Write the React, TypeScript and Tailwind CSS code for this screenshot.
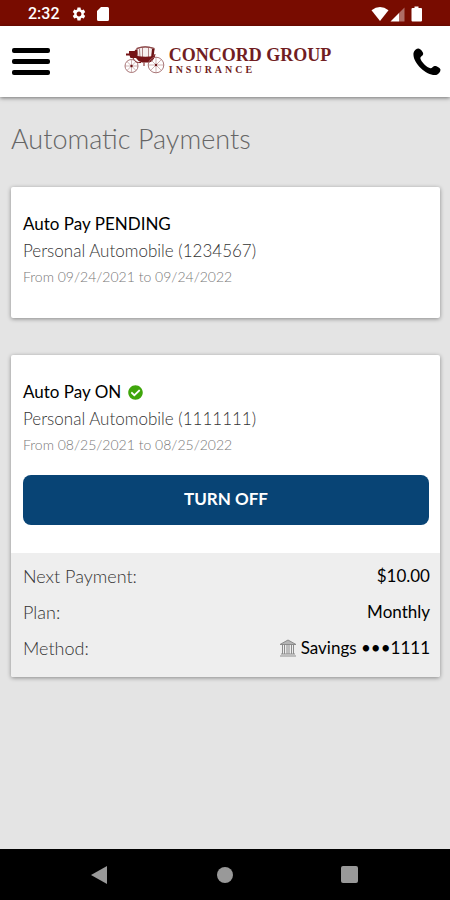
import { FaCheckCircle } from "react-icons/fa";
import { MdSettings } from "react-icons/md";

interface Policy {
  status: string;
  active: boolean;
  number: string;
  from: string;
  to: string;
}

const PENDING: Policy = {
  status: "Auto Pay PENDING",
  active: false,
  number: "1234567",
  from: "09/24/2021",
  to: "09/24/2022",
};

const ENROLLED: Policy = {
  status: "Auto Pay ON",
  active: true,
  number: "1111111",
  from: "08/25/2021",
  to: "08/25/2022",
};

function StatusBar() {
  return (
    <div className="flex h-[26px] items-center justify-between bg-[#780c00] pt-0.5 pr-[27px] pl-7 text-white">
      <div className="flex items-center">
        <span className="w-[43px] font-[Roboto,sans-serif] text-base font-medium">2:32</span>
        <MdSettings className="size-4" />
        <svg viewBox="0 0 12 14" className="ml-[10px] h-[14px] w-3" fill="currentColor" aria-hidden="true">
          <path d="M4 0h6.500a1.500 1.500 0 0 1 1.500 1.500v11a1.500 1.500 0 0 1-1.500 1.500h-9A1.500 1.500 0 0 1 0 12.500V4z" />
        </svg>
      </div>
      <svg viewBox="0 0 52 16" className="h-4 w-[52px]" fill="currentColor" aria-hidden="true">
        <path d="M0.500 4.200Q9 -2.400 17.500 4.200L9 15z" />
        <path d="M19.500 15.500 28 7v8.500z" />
        <path d="M28 7l5.500-5.500v14H28z" opacity="0.400" />
        <path d="M43.500 0.500h4v1.600h2.500a1 1 0 0 1 1 1V14.500a1 1 0 0 1-1 1h-8.500a1 1 0 0 1-1-1V3.100a1 1 0 0 1 1-1h2z" />
      </svg>
    </div>
  );
}

function Wheel({ cx, cy, r }: { cx: number; cy: number; r: number }) {
  const d = r * 0.7;
  return (
    <g stroke="#a06a6b" fill="none">
      <circle cx={cx} cy={cy} r={r} strokeWidth="0.900" />
      <path
        strokeWidth="0.500"
        d={`M${cx - r} ${cy}H${cx + r}M${cx} ${cy - r}V${cy + r}M${cx - d} ${cy - d}L${cx + d} ${cy + d}M${cx - d} ${cy + d}L${cx + d} ${cy - d}`}
      />
      <circle cx={cx} cy={cy} r="1.200" fill="#6b1517" stroke="none" />
    </g>
  );
}

function Carriage() {
  return (
    <svg viewBox="0 0 41 29" className="h-[29px] w-[41px]" aria-hidden="true">
      <path d="M13 3.500Q21 0.200 30 3.500L28.500 13H14z" fill="#f7f0f0" stroke="#8d4a4b" strokeWidth="0.800" />
      <path d="M12.500 3.600Q21 0 30.500 3.600" fill="none" stroke="#8d4a4b" strokeWidth="1.200" />
      <path d="M18.500 3v10M24.500 3v10M15.500 4l.5 8" stroke="#a06a6b" strokeWidth="0.800" />
      <path d="M28 4h2.500L29.500 13H27z" fill="#6b1517" />
      <path d="M2 8.500h3V6h5.500l1.200-1.500h1.500V11q8 1.500 16.800 0-.5 4.500-5 6.500h-7q-4-1-6-4.500H6.500l-1-2.500H2z" fill="#761417" />
      <path d="M9 13q2 5.500 8 4.500M31 9q-1 7-6 8M20 17.500v3.500" fill="none" stroke="#761417" strokeWidth="1" />
      <Wheel cx={7.5} cy={21} r={6.5} />
      <Wheel cx={32} cy={20} r={7.8} />
    </svg>
  );
}

function Header() {
  return (
    <header className="z-10 flex h-[71px] items-center justify-between bg-white pr-[9px] pl-3 shadow-[0_1px_4px_rgba(0,0,0,0.5)]">
      <button type="button" aria-label="Menu" className="flex w-[38px] flex-col gap-1.5">
        <span className="h-[5px] rounded-xs bg-black" />
        <span className="h-[5px] rounded-xs bg-black" />
        <span className="h-[5px] rounded-xs bg-black" />
      </button>
      <a href="#home" className="mr-2 mb-1 flex items-center gap-1 font-['Liberation_Serif',serif] text-[#711d22]">
        <Carriage />
        <span className="flex flex-col">
          <span className="text-lg leading-5 font-bold">CONCORD GROUP</span>
          <span className="text-[10px] leading-[10px] font-bold tracking-[3px]">INSURANCE</span>
        </span>
      </a>
      <button type="button" aria-label="Call">
        <svg viewBox="0 0 28 28" className="size-7" aria-hidden="true">
          <path d="M0.500 5C1 2.500 3.500.5 5.500.5c2 .3 4.800 3.500 4.700 5.500-.2 2-2.700 2.300-2.900 4 .2 3.300 6.800 9.700 10.200 10.300 1.700.2 2.200-2.100 4-2.300 2.200-.2 5.500 1.800 6 3.700 0 2.300-2.200 4.700-4.300 5.300C14.500 28.500-.8 15.500.5 5z" />
        </svg>
      </button>
    </header>
  );
}

function PolicyInfo({ policy }: { policy: Policy }) {
  return (
    <div>
      <h2 className="flex items-center gap-[7px] text-[17px] leading-7 text-black">
        {policy.status}
        {policy.active && <FaCheckCircle className="size-[15px] text-[#3fa60b]" />}
      </h2>
      <p className="text-[17px] leading-[26px] font-light text-[#333]">Personal Automobile ({policy.number})</p>
      <p className="text-sm leading-[26px] font-light text-[#777]">
        From {policy.from} to {policy.to}
      </p>
    </div>
  );
}

function BankIcon() {
  return (
    <svg viewBox="0 0 18 18" className="size-[18px]" fill="none" stroke="#8c8c8c" aria-hidden="true">
      <path d="M1 5.500 9 1l8 4.500z" fill="#b5b5b5" />
      <path d="M1 17h16M2 15h14" />
      <path d="M3.500 6v9M5.500 6v9M8 6v9M10 6v9M12.500 6v9M14.500 6v9" />
    </svg>
  );
}

function Detail({ label, children }: { label: string; children: React.ReactNode }) {
  return (
    <div className="flex h-9 items-center justify-between">
      <dt className="text-lg font-light text-[#333]">{label}</dt>
      <dd className="flex items-center gap-1 text-[17px] text-black">{children}</dd>
    </div>
  );
}

export default function App() {
  return (
    <div className="flex min-h-screen flex-col bg-[#e4e4e4] font-[Lato,sans-serif]">
      <StatusBar />
      <Header />

      <main className="flex-1 pr-2.5 pl-[11px]">
        <h1 className="pt-6 text-[27px] leading-9 font-light text-[#666]">Automatic Payments</h1>

        <section className="mt-[30px] rounded-xs bg-white pt-[23px] pr-[11px] pb-7 pl-3 shadow-[0_1px_4px_rgba(0,0,0,0.4)]">
          <PolicyInfo policy={PENDING} />
        </section>

        <section className="mt-[37px] rounded-xs bg-white shadow-[0_1px_4px_rgba(0,0,0,0.4)]">
          <div className="pt-[23px] pr-[11px] pb-7 pl-3">
            <PolicyInfo policy={ENROLLED} />
            <button
              type="button"
              className="mt-[17px] h-[50px] w-full rounded-lg bg-[#084475] pb-0.5 text-[17px] font-bold text-white"
            >
              TURN OFF
            </button>
          </div>
          <dl className="rounded-b-xs bg-[#eee] pt-[5px] pr-2.5 pb-[11px] pl-3">
            <Detail label="Next Payment:">$10.00</Detail>
            <Detail label="Plan:">Monthly</Detail>
            <Detail label="Method:">
              <BankIcon />
              Savings •••1111
            </Detail>
          </dl>
        </section>
      </main>

      <nav className="flex h-[51px] items-center justify-between bg-black pr-[92px] pl-[90px] text-[#999]">
        <button type="button" aria-label="Back">
          <svg viewBox="0 0 18 18" className="size-[18px]" fill="currentColor">
            <path d="M1 9 17 0v18z" />
          </svg>
        </button>
        <button type="button" aria-label="Home" className="size-4 rounded-full bg-[#999]" />
        <button type="button" aria-label="Recent apps" className="size-[17px] rounded-xs bg-[#999]" />
      </nav>
    </div>
  );
}
